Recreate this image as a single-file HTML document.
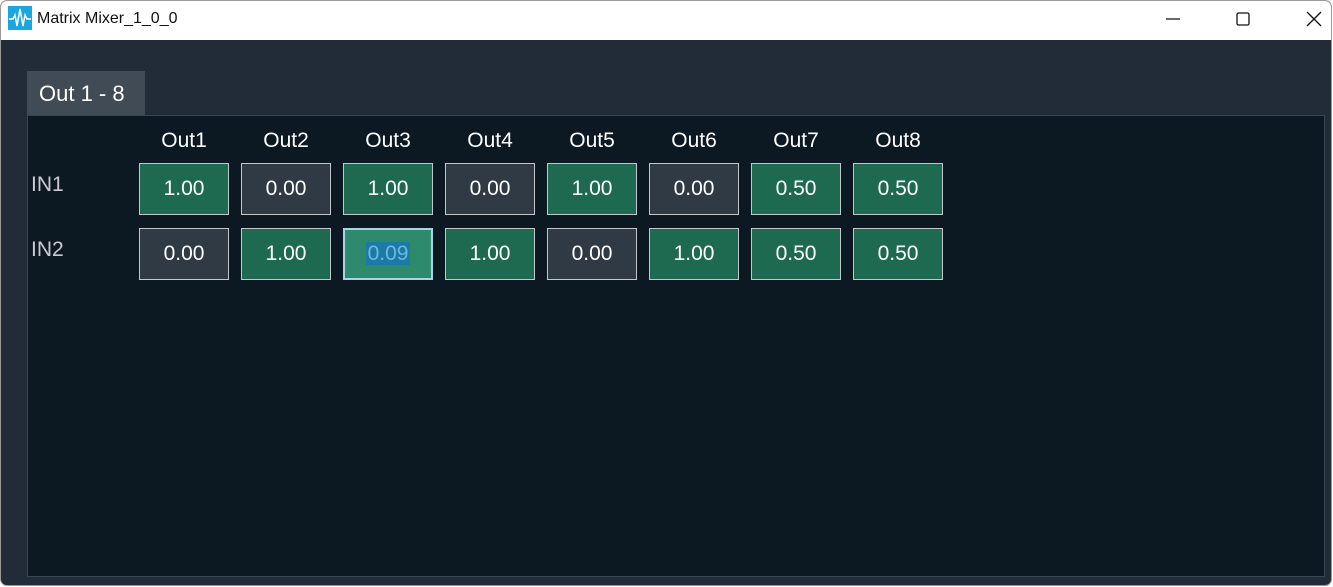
<!DOCTYPE html>
<html><head><meta charset="utf-8"><style>
*{margin:0;padding:0;box-sizing:border-box}
body{width:1333px;height:587px;background:#fff;font-family:"Segoe UI","Liberation Sans",sans-serif;position:relative;overflow:hidden}
.win{position:absolute;left:0;top:0;width:1332px;height:586px;border:1px solid #9a9a9a;border-radius:7px;overflow:hidden;background:#222c38}
.title{position:absolute;left:0;top:0;width:100%;height:39px;background:#fff}
.title .t{position:absolute;left:36px;top:9px;font-size:16px;color:#111}
.icon{position:absolute;left:7px;top:5px;width:24px;height:24px;background:#1aa7e0}
.ctl{position:absolute;top:0;height:39px;width:46px}
.tab{position:absolute;left:26px;top:70px;width:118px;height:45px;background:#414b55;color:#fff;font-size:22px;line-height:45px;padding-left:12px}
.panel{position:absolute;left:26px;top:114px;width:1298px;height:462px;background:#0c1822;border:1px solid #3b4652}
.h{position:absolute;top:128px;width:90px;text-align:center;color:#fff;font-size:21px}
.in{position:absolute;left:30px;color:#c8ccd0;font-size:21px}
.c{position:absolute;width:90px;height:52px;border:1px solid #c4c8cc;color:#fff;font-size:21px;text-align:center;line-height:50px}
.g{background:#1e6a50}.d{background:#2f3a44}
.sel{background:#2e8a6c;border:2px solid #a8d4ea;line-height:48px}
.sel span{background:#1d7aa6;color:#6cb8e0;padding:0 2px}
</style></head><body>
<div class="win">
<div class="title">
<svg class="icon" viewBox="0 0 24 24"><path d="M1 13h4l2-4 2 11 3-17 3 17 2-11 2 4h4" fill="none" stroke="#fff" stroke-width="1.5"/></svg>
<div class="t">Matrix Mixer_1_0_0</div>
<svg class="ctl" style="left:1150px" viewBox="0 0 46 39"><path d="M15 18h14" stroke="#111" stroke-width="1.2"/></svg>
<svg class="ctl" style="left:1219px" viewBox="0 0 46 39"><rect x="17" y="12" width="12" height="12" rx="1.5" fill="none" stroke="#111" stroke-width="1.3"/></svg>
<svg class="ctl" style="left:1289px" viewBox="0 0 46 39"><path d="M17 11l14 14M31 11L17 25" stroke="#111" stroke-width="1.3"/></svg>
</div>
<div class="tab">Out 1 - 8</div>
<div class="panel"></div>
<div class="h" style="left:138px">Out1</div><div class="h" style="left:240px">Out2</div><div class="h" style="left:342px">Out3</div><div class="h" style="left:444px">Out4</div><div class="h" style="left:546px">Out5</div><div class="h" style="left:648px">Out6</div><div class="h" style="left:750px">Out7</div><div class="h" style="left:852px">Out8</div>
<div class="in" style="top:172px">IN1</div><div class="in" style="top:237px">IN2</div>
<div class="c g" style="left:138px;top:162px">1.00</div><div class="c d" style="left:240px;top:162px">0.00</div><div class="c g" style="left:342px;top:162px">1.00</div><div class="c d" style="left:444px;top:162px">0.00</div><div class="c g" style="left:546px;top:162px">1.00</div><div class="c d" style="left:648px;top:162px">0.00</div><div class="c g" style="left:750px;top:162px">0.50</div><div class="c g" style="left:852px;top:162px">0.50</div>
<div class="c d" style="left:138px;top:227px">0.00</div><div class="c g" style="left:240px;top:227px">1.00</div><div class="c sel" style="left:342px;top:227px"><span>0.09</span></div><div class="c g" style="left:444px;top:227px">1.00</div><div class="c d" style="left:546px;top:227px">0.00</div><div class="c g" style="left:648px;top:227px">1.00</div><div class="c g" style="left:750px;top:227px">0.50</div><div class="c g" style="left:852px;top:227px">0.50</div>
</div>
</body></html>
